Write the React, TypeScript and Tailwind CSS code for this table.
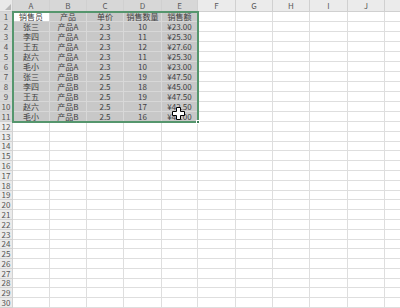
import React from "react";

const colW = [
  "w-[37px]", "w-[37px]", "w-[37px]", "w-[38px]", "w-[36px]",
  "w-[38px]", "w-[37px]", "w-[37px]", "w-[38px]", "w-[37px]", "w-[20px]",
];
const colNames = ["A", "B", "C", "D", "E", "F", "G", "H", "I", "J", ""];

const data: string[][] = [
  ["销售员", "产品", "单价", "销售数量", "销售额"],
  ["张三", "产品A", "2.3", "10", "¥23.00"],
  ["李四", "产品A", "2.3", "11", "¥25.30"],
  ["王五", "产品A", "2.3", "12", "¥27.60"],
  ["赵六", "产品A", "2.3", "11", "¥25.30"],
  ["毛小", "产品A", "2.3", "10", "¥23.00"],
  ["张三", "产品B", "2.5", "19", "¥47.50"],
  ["李四", "产品B", "2.5", "18", "¥45.00"],
  ["王五", "产品B", "2.5", "19", "¥47.50"],
  ["赵六", "产品B", "2.5", "17", "¥42.50"],
  ["毛小", "产品B", "2.5", "16", "¥40.00"],
];

const rowH = (r: number) =>
  r > 11 && (r === 14 || r === 19 || r === 24 || r === 28) ? "h-[9px]" : "h-[10px]";

export default function App() {
  const rows = Array.from({ length: 30 }, (_, i) => i + 1);
  return (
    <div
      className="relative w-[400px] h-[308px] overflow-hidden bg-white text-[8px] leading-none"
      style={{ fontFamily: '"Noto Sans CJK SC", "Noto Sans", sans-serif' }}
    >
      {/* header row */}
      <div className="flex h-[12px]">
        <div className="relative w-[13px] shrink-0 bg-[#e9e9e9] border-r border-b border-[#d0d0d0]">
          <div className="absolute right-[1px] bottom-[1px] w-0 h-0 border-l-[6px] border-l-transparent border-b-[6px] border-b-[#b8b8b8]" />
        </div>
        {colNames.map((c, i) => (
          <div
            key={i}
            className={`${colW[i]} shrink-0 flex items-center justify-center border-r border-b border-[#d0d0d0] text-[#5a5a5a] ${
              i < 5 ? "bg-[#d7d7d7]" : "bg-[#ebebeb]"
            }`}
          >
            {c}
          </div>
        ))}
      </div>
      {rows.map((r) => (
        <div key={r} className={`flex ${rowH(r)}`}>
          <div
            className={`w-[13px] shrink-0 flex items-center justify-center border-r border-b border-[#d2d2d2] text-[#555] ${
              r <= 11 ? "bg-[#d7d7d7]" : "bg-[#ebebeb]"
            }`}
          >
            {r}
          </div>
          {colW.map((w, ci) => {
            const sel = r <= 11 && ci < 5;
            const active = r === 1 && ci === 0;
            const txt = r <= 11 && ci < 5 ? data[r - 1][ci] : "";
            return (
              <div
                key={ci}
                className={`${w} shrink-0 flex items-center justify-center border-r border-b text-[#404040] whitespace-nowrap ${
                  active
                    ? "bg-white border-[#d4d4d4]"
                    : sel
                    ? "bg-[#c8c8c8] border-[#d8d8d8]"
                    : "bg-white border-[#dedede]"
                }`}
              >
                {txt}
              </div>
            );
          })}
        </div>
      ))}
      {/* selection border */}
      <div className="absolute left-[12px] top-[11px] w-[187px] h-[112px] border-2 border-[#55966d] pointer-events-none" />
      <div className="absolute left-[196px] top-[120px] w-[4px] h-[4px] bg-[#3f7f58] border border-white" />
      {/* cursor */}
      <svg className="absolute left-[172px] top-[107px]" width="13" height="13" viewBox="0 0 13 13">
        <path
          d="M4.5 0.5h4v4h4v4h-4v4h-4v-4h-4v-4h4z"
          fill="#fff"
          stroke="#000"
          strokeWidth="1"
        />
      </svg>
    </div>
  );
}
